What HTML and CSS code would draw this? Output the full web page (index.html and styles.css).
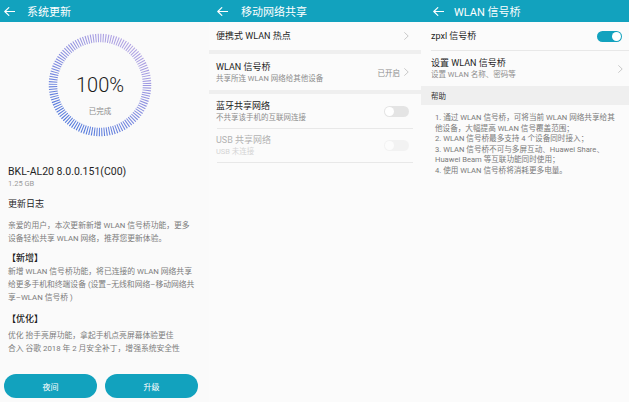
FILE: index.html
```html
<!DOCTYPE html>
<html lang="zh-CN">
<head>
<meta charset="utf-8">
<title>系统更新 / 移动网络共享 / WLAN 信号桥</title>
<link rel="stylesheet" href="styles.css">
</head>
<body>
<div class="screen">
  <section class="panel p1">
    <header class="bar bar-1">
      <svg class="back" viewBox="0 0 11 9"><path d="M0.8 4.5 H10.6 M4.8 0.6 L0.8 4.5 L4.8 8.4"/></svg>
      <span>系统更新</span>
    </header>
    <div class="hero">
      <div class="ring">
        <svg class="ring-svg" viewBox="0 0 104 104">
          <defs>
            <linearGradient id="rg" x1="0.85" y1="0" x2="0.15" y2="1">
              <stop offset="0" stop-color="#b9a7e4"/>
              <stop offset="0.45" stop-color="#8b8fe0"/>
              <stop offset="1" stop-color="#4d78dc"/>
            </linearGradient>
          </defs>
          <circle cx="52" cy="52" r="47" fill="none" stroke="url(#rg)" stroke-width="8.5" stroke-dasharray="1.05 1.41"/>
        </svg>
        <div class="ring-text">
          <div class="pct">100%</div>
          <div class="done">已完成</div>
        </div>
      </div>
    </div>
    <div class="notes">
      <div class="ver">BKL-AL20 8.0.0.151(C00)</div>
      <div class="size">1.25 GB</div>
      <div class="head h-log">更新日志</div>
      <p class="txt t-1"><span>亲爱的用户，本次更新新增 WLAN 信号桥功能，更多</span><span>设备轻松共享 WLAN 网络，推荐您更新体验。</span></p>
      <div class="head h-new">【新增】</div>
      <p class="txt"><span>新增 WLAN 信号桥功能，将已连接的 WLAN 网络共享</span><span>给更多手机和终端设备 (设置–无线和网络–移动网络共</span><span>享–WLAN 信号桥 )</span></p>
      <div class="head h-opt">【优化】</div>
      <p class="txt t-3"><span>优化 抬手亮屏功能，拿起手机点亮屏幕体验更佳</span><span>合入 谷歌 2018 年 2 月安全补丁，增强系统安全性</span></p>
    </div>
    <div class="btns">
      <button class="btn">夜间</button>
      <button class="btn">升级</button>
    </div>
  </section>

  <section class="panel p2">
    <header class="bar bar-2">
      <svg class="back" viewBox="0 0 11 9"><path d="M0.8 4.5 H10.6 M4.8 0.6 L0.8 4.5 L4.8 8.4"/></svg>
      <span>移动网络共享</span>
    </header>
    <div class="row r-hot">
      <div class="title">便携式 WLAN 热点</div>
      <svg class="chev" viewBox="0 0 5 8"><path d="M0.6 0.6 L4.2 4 L0.6 7.4"/></svg>
    </div>
    <div class="band"></div>
    <div class="row r-bridge">
      <div class="texts">
        <div class="title">WLAN 信号桥</div>
        <div class="sub">共享所连 WLAN 网络给其他设备</div>
      </div>
      <div class="right">
        <span class="state">已开启</span>
        <svg class="chev" viewBox="0 0 5 8"><path d="M0.6 0.6 L4.2 4 L0.6 7.4"/></svg>
      </div>
    </div>
    <div class="band"></div>
    <div class="row r-bt">
      <div class="texts">
        <div class="title">蓝牙共享网络</div>
        <div class="sub">不共享该手机的互联网连接</div>
      </div>
      <span class="toggle"></span>
    </div>
    <div class="divider"></div>
    <div class="row r-usb faded">
      <div class="texts">
        <div class="title">USB 共享网络</div>
        <div class="sub">USB 未连接</div>
      </div>
      <span class="toggle"></span>
    </div>
    <div class="divider"></div>
  </section>

  <section class="panel p3">
    <header class="bar bar-3">
      <svg class="back" viewBox="0 0 11 9"><path d="M0.8 4.5 H10.6 M4.8 0.6 L0.8 4.5 L4.8 8.4"/></svg>
      <span>WLAN 信号桥</span>
    </header>
    <div class="row r-zp">
      <div class="title">zpxl 信号桥</div>
      <span class="toggle on"></span>
    </div>
    <div class="divider d3"></div>
    <div class="row r-set">
      <div class="texts">
        <div class="title">设置 WLAN 信号桥</div>
        <div class="sub">设置 WLAN 名称、密码等</div>
      </div>
      <svg class="chev" viewBox="0 0 5 8"><path d="M0.6 0.6 L4.2 4 L0.6 7.4"/></svg>
    </div>
    <div class="sec">帮助</div>
    <div class="help">
      <span>1. 通过 WLAN 信号桥，可将当前 WLAN 网络共享给其</span>
      <span>他设备，大幅提高 WLAN 信号覆盖范围；</span>
      <span>2. WLAN 信号桥最多支持 4 个设备同时接入；</span>
      <span>3. WLAN 信号桥不可与多屏互动、Huawei Share、</span>
      <span>Huawei Beam 等互联功能同时使用；</span>
      <span>4. 使用 WLAN 信号桥将消耗更多电量。</span>
    </div>
  </section>
</div>
</body>
</html>
```

FILE: styles.css
```css
* {
  margin: 0;
  padding: 0;
  box-sizing: border-box;
}

body {
  width: 629px;
  height: 402px;
  overflow: hidden;
  background: #fafafa;
  font-family: Roboto, "Noto Sans CJK SC", sans-serif;
  color: #222;
}

.screen {
  display: flex;
  height: 402px;
}

.panel {
  height: 402px;
  background: #fafafa;
  display: flex;
  flex-direction: column;
}

.p1 { width: 209px; }
.p2 { width: 212px; background: #fbfbfb; }
.p3 { width: 208px; background: #fbfbfb; }

/* header bar */
.bar {
  height: 22px;
  flex: none;
  background: #12a2be;
  color: #fff;
  display: flex;
  align-items: center;
  font-size: 11px;
  font-family: Roboto, "Noto Sans CJK SC", sans-serif;
}

.back {
  width: 11px;
  height: 9px;
  flex: none;
}

.back path {
  fill: none;
  stroke: #fff;
  stroke-width: 1.2;
  stroke-linecap: round;
  stroke-linejoin: round;
}

.bar-1 { padding-left: 4px; gap: 12px; }
.bar-2 { padding-left: 8px; gap: 13px; }
.bar-3 { padding-left: 12px; gap: 10px; }

/* progress ring */
.hero {
  height: 115px;
  padding-top: 11px;
  padding-left: 48px;
  flex: none;
}

.ring {
  width: 104px;
  height: 104px;
  display: grid;
}

.ring-svg,
.ring-text {
  grid-area: 1 / 1;
}

.ring-svg {
  width: 104px;
  height: 104px;
}

.ring-text {
  display: flex;
  flex-direction: column;
  align-items: center;
  padding-top: 40px;
}

.pct {
  font-size: 20px;
  line-height: 24px;
  color: #1a1a1a;
  font-weight: 300;
}

.done {
  margin-top: 10px;
  font-size: 7.5px;
  line-height: 10px;
  color: #8a8a8a;
}

/* release notes */
.notes {
  padding: 0 8px;
}

.ver {
  margin-top: 27px;
  font-size: 10.5px;
  line-height: 15px;
  color: #1f1f1f;
}

.size {
  font-size: 7.5px;
  line-height: 10px;
  color: #9a9a9a;
}

.head {
  font-size: 9px;
  line-height: 14px;
  color: #1c1c1c;
}

.h-log { margin-top: 8px; }
.h-new { margin-top: 6px; font-weight: 500; margin-left: -1px; }
.h-opt { margin-top: 8px; font-weight: 500; margin-left: -1px; }

.txt {
  font-size: 7.8px;
  line-height: 13px;
  color: #7c7c7c;
}

.txt span {
  display: block;
  white-space: nowrap;
}

.t-1 { margin-top: 8px; }
.t-3 { margin-top: 3px; }

.btns {
  margin-top: auto;
  padding: 0 0 4px 4px;
  display: flex;
  gap: 8px;
}

.btn {
  width: 93px;
  height: 24px;
  border: none;
  border-radius: 12px;
  background: #12a2be;
  color: #fff;
  font-family: Roboto, "Noto Sans CJK SC", sans-serif;
  font-size: 8px;
}

/* list rows */
.row {
  display: flex;
  align-items: center;
  justify-content: space-between;
  flex: none;
}

.title {
  font-size: 9px;
  line-height: 12px;
  color: #1e1e1e;
  white-space: nowrap;
}

.sub {
  font-size: 7.5px;
  line-height: 10px;
  color: #8c8c8c;
  white-space: nowrap;
}

.texts {
  display: flex;
  flex-direction: column;
  gap: 1px;
}

.chev {
  width: 5px;
  height: 8px;
  flex: none;
}

.chev path {
  fill: none;
  stroke: #c4c4c4;
  stroke-width: 0.9;
  stroke-linecap: round;
  stroke-linejoin: round;
}

.right {
  display: flex;
  align-items: center;
  gap: 4px;
}

.state {
  font-size: 7.5px;
  color: #8c8c8c;
}

.band {
  height: 4px;
  background: #efefef;
  flex: none;
}

.divider {
  height: 1px;
  background: #e8e8e8;
  margin: 0 8px;
  flex: none;
}

.r-hot { height: 28px; padding: 0 12px 0 7px; }
.r-bridge { height: 36px; padding: 0 12px 0 7px; }
.r-bt { height: 34px; padding: 0 12px 0 7px; }
.r-usb { height: 33px; padding: 0 12px 0 7px; }

.faded { opacity: 0.35; }

.toggle {
  width: 25px;
  height: 11px;
  border-radius: 6px;
  background: #e4e4e4;
  display: flex;
  align-items: center;
  padding: 0 1px;
  flex: none;
}

.toggle::before {
  content: "";
  width: 9px;
  height: 9px;
  border-radius: 50%;
  background: #fff;
}

.toggle.on {
  background: #12a2be;
  justify-content: flex-end;
}

/* panel 3 */
.r-zp { height: 28px; padding: 0 7px 0 10px; }
.d3 { margin: 0 0 0 10px; }
.r-set { height: 35px; padding: 0 6px 0 10px; }

.sec {
  height: 19px;
  flex: none;
  background: #efefef;
  display: flex;
  align-items: center;
  padding-left: 10px;
  font-size: 7.5px;
  color: #333;
}

.help {
  padding: 8px 8px 0 14px;
  font-size: 7.6px;
  line-height: 10.5px;
  color: #7a7a7a;
}

.help span {
  display: block;
  white-space: nowrap;
}
```
